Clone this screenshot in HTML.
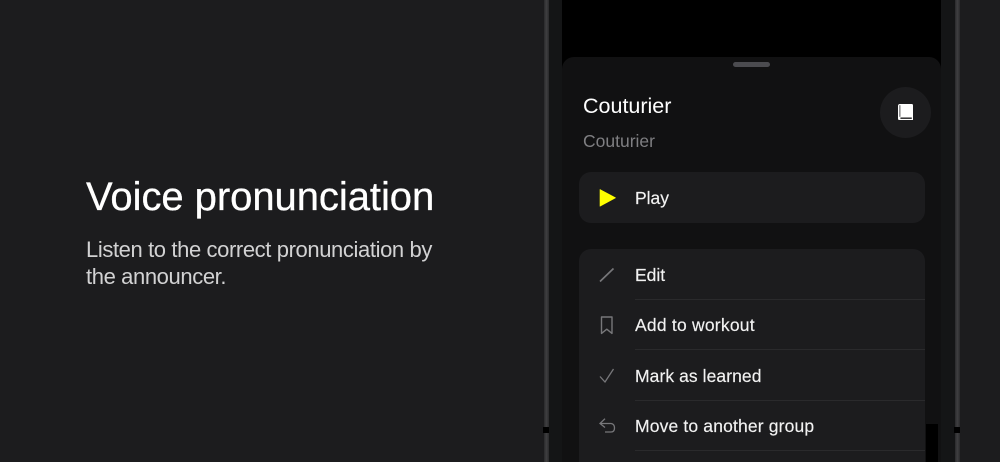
<!DOCTYPE html>
<html lang="en">
<head>
<meta charset="utf-8">
<title>Voice pronunciation</title>
<style>
html,body{margin:0;padding:0;width:1000px;height:462px;overflow:hidden;background:#1c1c1e;font-family:"Liberation Sans",sans-serif}
.a{position:absolute;white-space:nowrap}
#stage{position:relative;width:1000px;height:462px;overflow:hidden;background:#1c1c1e}
.t{color:#f2f2f2;font-size:17.5px;line-height:20px;letter-spacing:.15px;-webkit-text-stroke:.15px #f2f2f2}
.sep{position:absolute;left:635px;width:290px;height:1px;background:#2a2a2c}
</style>
</head>
<body>
<div id="stage">
<div class="a" style="left:86px;top:174px;font-size:40px;line-height:46px;color:#fff;letter-spacing:-.05px;-webkit-text-stroke:.3px #fff">Voice pronunciation</div>
<div class="a" style="left:86px;top:236px;font-size:22px;line-height:27px;color:#d2d2d3;letter-spacing:-.39px">Listen to the correct pronunciation by<br>the announcer.</div>

<div class="a" style="left:544px;top:0;width:5px;height:462px;background:linear-gradient(90deg,#2a2a2c,#3f3f41 50%,#2a2a2c)"></div>
<div class="a" style="left:549px;top:0;width:13px;height:462px;background:#141516"></div>
<div class="a" style="left:941px;top:0;width:14px;height:462px;background:#141516"></div>
<div class="a" style="left:955px;top:0;width:5px;height:462px;background:linear-gradient(90deg,#2a2a2c,#3f3f41 50%,#2a2a2c)"></div>
<div class="a" style="left:543px;top:427px;width:6px;height:6px;background:#000"></div>
<div class="a" style="left:954px;top:427px;width:6px;height:6px;background:#000"></div>

<div class="a" style="left:562px;top:0;width:379px;height:462px;background:#000"></div>
<div class="a" style="left:562px;top:57px;width:379px;height:405px;background:#111112;border-radius:12px 12px 0 0"></div>
<div class="a" style="left:733px;top:62px;width:37px;height:5px;border-radius:3px;background:#4b4b4f"></div>

<div class="a" style="left:583px;top:93px;font-size:21.5px;line-height:26px;color:#fff">Couturier</div>
<div class="a" style="left:583px;top:131px;font-size:17.5px;line-height:21px;color:#7f7f82">Couturier</div>

<div class="a" style="left:880px;top:87px;width:51px;height:51px;border-radius:50%;background:#1c1c1e"></div>
<svg class="a" style="left:896px;top:102px" width="20" height="20" viewBox="0 0 20 20">
<path d="M2 4Q2 2 4 2H15.8Q17 2 17 3.2V18H3.4Q2 18 2 16.6ZM4.4 15.5V16.9H15.8V15.5Z" fill="#fff" fill-rule="evenodd"/>
<path d="M3.9 3.2V14.8" stroke="#3a3a3c" stroke-width=".9" fill="none"/>
</svg>

<div class="a" style="left:579px;top:172px;width:346px;height:51px;border-radius:12px;background:#1c1c1e"></div>
<svg class="a" style="left:598px;top:188px" width="20" height="20" viewBox="0 0 20 20">
<path d="M2 1.5V18.2L17.5 9.8Z" fill="#ffff00" stroke="#ffff00" stroke-width=".6" stroke-linejoin="round"/>
</svg>
<div class="a t" style="left:635px;top:188px;letter-spacing:0">Play</div>

<div class="a" style="left:926px;top:424px;width:12px;height:38px;background:#000"></div>
<div class="a" style="left:579px;top:249px;width:346px;height:213px;border-radius:12px 12px 0 0;background:#1c1c1e"></div>

<div class="sep" style="top:299px"></div>
<div class="sep" style="top:349px"></div>
<div class="sep" style="top:400px"></div>
<div class="sep" style="top:450px"></div>

<svg class="a" style="left:597px;top:265px" width="20" height="20" viewBox="0 0 20 20">
<path d="M3 16.5L16.5 3.5" fill="none" stroke="#77777a" stroke-width="1.7"/>
</svg>
<div class="a t" style="left:635px;top:265px;letter-spacing:0">Edit</div>

<svg class="a" style="left:597px;top:315px" width="20" height="20" viewBox="0 0 20 20">
<path d="M4.5 2H15V18.4L9.8 14.2L4.5 18.4Z" fill="none" stroke="#77777a" stroke-width="1.4" stroke-linejoin="round"/>
</svg>
<div class="a t" style="left:635px;top:315px;letter-spacing:.22px">Add to workout</div>

<svg class="a" style="left:597px;top:366px" width="20" height="20" viewBox="0 0 20 20">
<path d="M3 10.5L8 16L16.5 3" fill="none" stroke="#77777a" stroke-width="1.3"/>
</svg>
<div class="a t" style="left:635px;top:365.5px;letter-spacing:.07px">Mark as learned</div>

<svg class="a" style="left:597px;top:416px" width="20" height="20" viewBox="0 0 20 20">
<path d="M8 2.7L3 7.5L8 11.5M3 7.5H14Q17.5 8 17.5 12Q17.5 16 14 16H8" fill="none" stroke="#77777a" stroke-width="1.3"/>
</svg>
<div class="a t" style="left:635px;top:416px">Move to another group</div>
</div>
</body>
</html>
